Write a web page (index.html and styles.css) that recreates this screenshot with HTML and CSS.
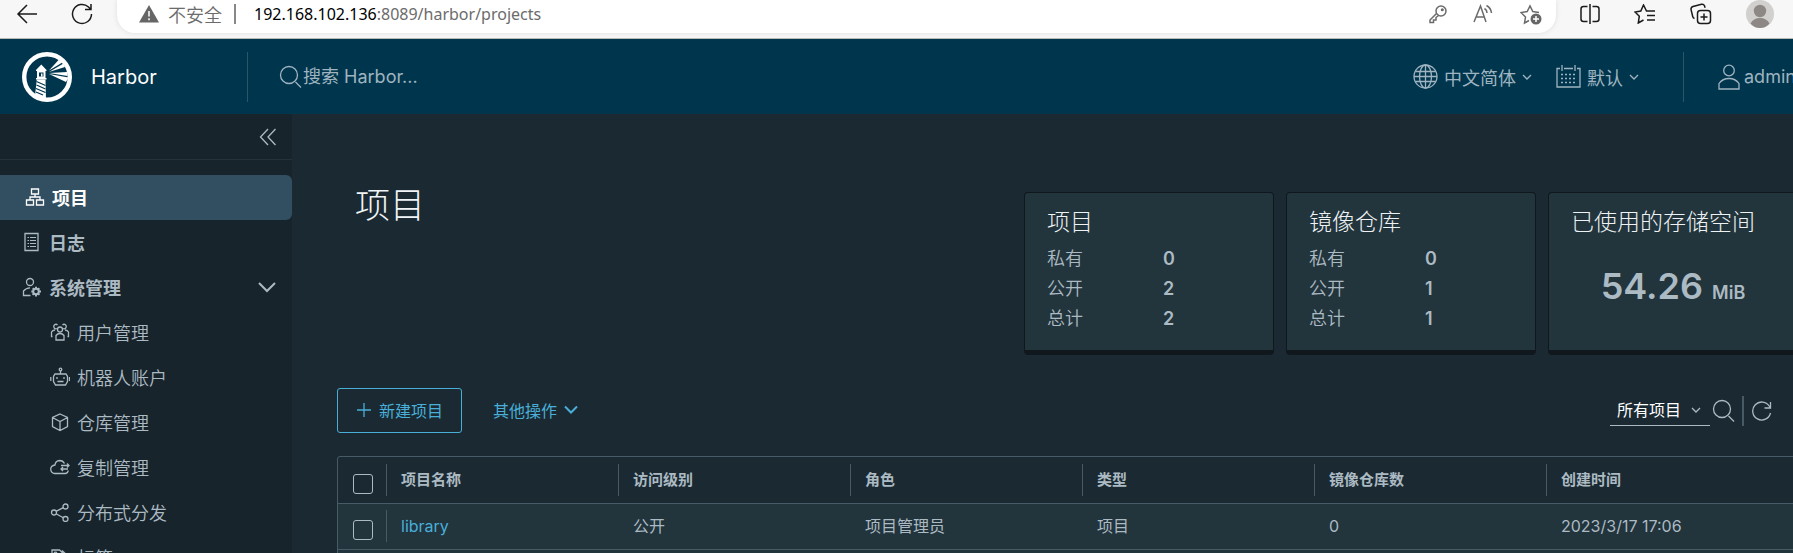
FILE: index.html
```html
<!DOCTYPE html>
<html lang="zh-CN">
<head>
    <meta charset="UTF-8">
    <meta name="viewport" content="width=device-width, initial-scale=1.0">
    <title>Harbor</title>
    <link rel="stylesheet" href="styles.css">
</head>
<body>
    <div class="browser-bar">
        <button class="browser-btn" aria-label="返回">
            <svg width="22" height="22" viewBox="0 0 22 22"><path d="M21 11H2M11 2l-9 9 9 9"/></svg>
        </button>
        <button class="browser-btn" aria-label="刷新">
            <svg width="22" height="22" viewBox="0 0 22 22"><path d="M20.500 11a9.500 9.500 0 1 1-3-7L20 6.500M20 1v5.500h-6"/></svg>
        </button>
        <div class="address">
            <svg width="20" height="20" viewBox="0 0 20 20"><path class="solid" d="M10 1 20 18.500H0z"/><path class="mark" d="M10 7v5.500M10 14.300v2"/></svg>
            <span class="insecure">不安全</span>
            <span class="address-divider"></span>
            <span class="url"><b>192.168.102.136</b>:8089/harbor/projects</span>
            <div class="address-actions">
                <button class="browser-btn" aria-label="密码">
                    <svg width="18" height="20" viewBox="0 0 18 20"><circle cx="12" cy="7" r="5"/><circle cx="13.300" cy="5.700" r=".8"/><path d="M7.500 9.500 1 16v2.500h3.500V16H7v-2.500l2.500-2"/></svg>
                </button>
                <button class="browser-btn" aria-label="朗读">
                    <svg width="21" height="20" viewBox="0 0 21 20"><path d="M1 18 7.500 2 13 18M3 13h8.500M11.500 4.500q2.500 1.500 2.500 4.500M13.500 1.500q4.500 2.500 5 7.500"/></svg>
                </button>
                <button class="browser-btn" aria-label="收藏">
                    <svg width="22" height="22" viewBox="0 0 22 22"><path d="M9 17.500 4.500 20l1-6L1 9.500l6.200-.9L10 3l2.800 5.600 6.200.9"/><circle class="solid" cx="16" cy="16" r="5.500"/><path class="mark" d="M16 13v6M13 16h6"/></svg>
                </button>
            </div>
        </div>
        <div class="browser-tools">
            <button class="browser-btn" aria-label="分屏">
                <svg width="20" height="20" viewBox="0 0 20 20"><path d="M7.500 2.500H3.500q-2.500 0-2.500 2.500v10q0 2.500 2.500 2.500h4M12.500 2.500h4q2.500 0 2.500 2.500v10q0 2.500-2.500 2.500h-4M10 0v20"/></svg>
            </button>
            <button class="browser-btn" aria-label="收藏夹">
                <svg width="22" height="20" viewBox="0 0 22 20"><path d="M14 7h-1.500L9.500 1 6.800 7 1 8l4.300 4.200L4.300 19l5.200-3M14 7h7M13 11.500h8M13 16h8"/></svg>
            </button>
            <button class="browser-btn" aria-label="集锦">
                <svg width="22" height="22" viewBox="0 0 22 22"><rect x="7.500" y="7.500" width="13" height="13" rx="3"/><path d="M14 10.500v7M10.500 14h7M4.500 15.500Q3 15 2.700 13.500L1 6.500Q.8 4.300 3 3.500l8.500-2.200q2.200-.4 3 1.500l.6 2"/></svg>
            </button>
            <button class="browser-btn" aria-label="用户">
                <svg width="28" height="28" viewBox="0 0 28 28"><circle class="avatar-bg" cx="14" cy="14" r="14"/><circle class="avatar" cx="14" cy="11" r="6.200"/><path class="avatar" d="M4.500 23.500q3-5.500 9.500-5.500t9.500 5.500Q19.500 28 14 28t-9.500-4.500z"/></svg>
            </button>
        </div>
    </div>

    <div class="app">
        <header class="header">
            <a class="brand" href="#projects">
                <svg width="50" height="50" viewBox="0 0 50 50">
                    <circle cx="25" cy="25" r="22.800" fill="none" stroke="#fff" stroke-width="4.400"/>
                    <g fill="#fff">
                        <path d="M19.300 12.500 24.500 18v1h-1v7h1v1.500H14V26h1v-7h-1v-1z"/>
                        <path d="M14.800 27.500h8.700L24 48l-11-4z"/>
                        <path d="M27 18.500 36.500 8l5.500 1.500z"/>
                        <path d="M27 20 41.500 11.500 43 15z"/>
                        <path d="M27 21l18.500-1v4z"/>
                        <path d="M27 22l19.500 3.500L44 30z"/>
                    </g>
                    <path d="M17 20.500h4.500v4H17z" fill="#00364d"/>
                    <path d="M19 21.500h1.500v3H19z" fill="#fff"/>
                    <path d="M14.500 29.500l9 4M14.500 33l9 4M14 36.500l9.500 4M14 40l7 3" stroke="#00364d" stroke-width="1.200"/>
                </svg>
                <span>Harbor</span>
            </a>
            <form class="search">
                <svg width="23" height="23" viewBox="0 0 23 23"><circle cx="10" cy="10" r="8.500"/><path d="M16.500 17 22 22.500"/></svg>
                <input type="text" placeholder="搜索 Harbor..." aria-label="搜索 Harbor">
            </form>
            <div class="header-actions">
                <button class="header-btn">
                    <svg width="25" height="25" viewBox="0 0 25 25"><circle cx="12.500" cy="12.500" r="11.500"/><ellipse cx="12.500" cy="12.500" rx="6" ry="11.500"/><path d="M12.500 1v23M2.500 7.500h20M1 12.500h23M2.500 17.500h20"/></svg>
                    <span>中文简体</span>
                    <svg width="10" height="10" viewBox="0 0 10 10"><path d="M1 3l4 4 4-4"/></svg>
                </button>
                <button class="header-btn">
                    <svg width="25" height="25" viewBox="0 0 25 25"><path d="M4 4.500H1v18.500h23V4.500h-3M8 4.500h9M6 1v6M19 1v6"/><path d="M5 10.500h16M5 14.500h16M5 18.500h16" stroke-dasharray="2 2"/></svg>
                    <span>默认</span>
                    <svg width="10" height="10" viewBox="0 0 10 10"><path d="M1 3l4 4 4-4"/></svg>
                </button>
                <button class="header-btn user">
                    <svg width="22" height="26" viewBox="0 0 22 26"><circle cx="11" cy="6.500" r="5.300"/><path d="M1 25v-5.500q3.500-5 10-5t10 5V25z"/></svg>
                    <span>admin</span>
                </button>
            </div>
        </header>

        <div class="content">
            <nav class="sidebar">
                <div class="collapse">
                    <button aria-label="收起">
                        <svg width="18" height="18" viewBox="0 0 18 18"><path d="M9 1 1.500 9 9 17M16.500 1 9 9l7.500 8"/></svg>
                    </button>
                </div>
                <ul>
                    <li><a class="active" href="#projects">
                        <svg width="20" height="20" viewBox="0 0 20 20"><path d="M6.500 2h7v5h-7zM1.500 13h7v5h-7zM11.500 13h7v5h-7zM10 7v3M5 13v-3h10v3"/></svg>
                        项目</a></li>
                    <li><a href="#logs">
                        <svg width="20" height="20" viewBox="0 0 20 20"><path d="M3 1.500h13v17H3z"/><path d="M5.500 5.500h1.500M5.500 8.500h1.500M5.500 11.500h1.500M5.500 14.500h1.500M8 5.500h6M8 8.500h6M8 11.500h6M8 14.500h6" stroke-width="1"/></svg>
                        日志</a></li>
                    <li><a href="#admin">
                        <svg width="20" height="20" viewBox="0 0 20 20"><circle cx="8" cy="5" r="3.500"/><path d="M8.500 18.500H1.500V14q2.500-3 6.500-3.200"/><circle cx="14" cy="14.500" r="2.800" stroke-width="2"/><path d="M14 9.800v2M14 17.500v2M9.300 14.500h2M17 14.500h2M10.700 11.200l1.200 1.200M16 16.500l1.400 1.400M17.400 11.200 16 12.500M12 16.500l-1.400 1.400" stroke-width="2"/></svg>
                        系统管理
                        <svg class="chevron" width="18" height="18" viewBox="0 0 18 18"><path d="M1 5l8 8 8-8" stroke-width="2"/></svg></a>
                        <ul class="submenu">
                            <li><a href="#users">
                                <svg width="20" height="20" viewBox="0 0 20 20"><circle cx="10" cy="7.500" r="2.500"/><path d="M6 18v-4.500q1.500-2 4-2t4 2V18zM7 6.500A2.200 2.200 0 1 1 7.500 3M13 6.500A2.200 2.200 0 1 0 12.500 3M2.500 14.500H1.500V10q1-1.800 3.500-2M17.500 14.500h1V10q-1-1.800-3.500-2"/></svg>
                                用户管理</a></li>
                            <li><a href="#robots">
                                <svg width="20" height="20" viewBox="0 0 20 20"><circle cx="10.500" cy="2.500" r="1.300"/><path d="M10.500 4v3M5 7h11l1.500 2.500v5L15.500 18h-10l-2-3.500v-5zM.8 10v4M19.500 10v4M7 10v2M14 10v2M7.500 14.500h6"/></svg>
                                机器人账户</a></li>
                            <li><a href="#registries">
                                <svg width="20" height="20" viewBox="0 0 20 20"><path d="M10 2l7.500 3.500v9L10 18.500 2.500 14.500v-9zM2.500 5.500 10 9.500l7.500-4M10 9.500v9"/></svg>
                                仓库管理</a></li>
                            <li><a href="#replications">
                                <svg width="20" height="20" viewBox="0 0 20 20"><path d="M14.500 6.500Q13 3.500 9.500 3.500q-4 .3-4.500 4.500-4 .5-4.300 4Q.8 16 4.500 16.500h11q2.500-.5 2.700-3M11 8.500h8M17 6.500l2 2-2 2M18 12h-7M13 10l-2 2 2 2"/></svg>
                                复制管理</a></li>
                            <li><a href="#distributions">
                                <svg width="20" height="20" viewBox="0 0 20 20"><circle cx="4" cy="10.500" r="2.500"/><circle cx="15.500" cy="4.500" r="2.500"/><circle cx="15.500" cy="17" r="2.500"/><path d="M6 9.300l7.300-3.700M6 11.700l7.300 4"/></svg>
                                分布式分发</a></li>
                            <li><a href="#labels">
                                <svg width="20" height="20" viewBox="0 0 20 20"><path d="M2 3h7.500l8.500 8-6 7-10-9zM12 3.500l7 6.500"/><circle cx="5.500" cy="6.500" r="1.300"/></svg>
                                标签</a></li>
                        </ul>
                    </li>
                </ul>
            </nav>

            <main>
                <section class="summary">
                    <h1>项目</h1>
                    <div class="cards">
                        <div class="card">
                            <h2>项目</h2>
                            <dl>
                                <dt>私有</dt><dd>0</dd>
                                <dt>公开</dt><dd>2</dd>
                                <dt>总计</dt><dd>2</dd>
                            </dl>
                        </div>
                        <div class="card">
                            <h2>镜像仓库</h2>
                            <dl>
                                <dt>私有</dt><dd>0</dd>
                                <dt>公开</dt><dd>1</dd>
                                <dt>总计</dt><dd>1</dd>
                            </dl>
                        </div>
                        <div class="card">
                            <h2>已使用的存储空间</h2>
                            <p class="storage">54.26 <small>MiB</small></p>
                        </div>
                    </div>
                </section>

                <section class="toolbar">
                    <button class="btn-new">
                        <svg width="16" height="16" viewBox="0 0 16 16"><path d="M8 1v14M1 8h14"/></svg>
                        新建项目
                    </button>
                    <button class="btn-more">
                        其他操作
                        <svg width="14" height="14" viewBox="0 0 14 14"><path d="M1 3.500l6 6 6-6" stroke-width="2"/></svg>
                    </button>
                    <div class="filters">
                        <div class="select-wrap">
                            <select aria-label="项目筛选">
                                <option>所有项目</option>
                                <option>私有项目</option>
                                <option>公开项目</option>
                            </select>
                            <svg width="10" height="10" viewBox="0 0 10 10"><path d="M1 3l4 4 4-4"/></svg>
                        </div>
                        <button aria-label="搜索">
                            <svg width="23" height="23" viewBox="0 0 23 23"><circle cx="10" cy="10" r="8.500"/><path d="M16.500 17 22 22.500"/></svg>
                        </button>
                        <span class="filter-divider"></span>
                        <button aria-label="刷新列表">
                            <svg width="20" height="20" viewBox="0 0 20 20"><path d="M18.500 12a9 9 0 1 1-1-6.500L18.500 7M18.500 1v6h-6"/></svg>
                        </button>
                    </div>
                </section>

                <div class="datagrid">
                    <table>
                        <thead>
                            <tr>
                                <th class="col-check"><input type="checkbox" aria-label="全选"></th>
                                <th><div>项目名称</div></th>
                                <th><div>访问级别</div></th>
                                <th><div>角色</div></th>
                                <th><div>类型</div></th>
                                <th><div>镜像仓库数</div></th>
                                <th class="col-time"><div>创建时间</div></th>
                            </tr>
                        </thead>
                        <tbody>
                            <tr>
                                <td><input type="checkbox" aria-label="选择 library"></td>
                                <td><div><a href="#library">library</a></div></td>
                                <td><div>公开</div></td>
                                <td><div>项目管理员</div></td>
                                <td><div>项目</div></td>
                                <td><div>0</div></td>
                                <td><div>2023/3/17 17:06</div></td>
                            </tr>
                            <tr>
                                <td></td><td></td><td></td><td></td><td></td><td></td><td></td>
                            </tr>
                        </tbody>
                    </table>
                </div>
            </main>
        </div>
    </div>
</body>
</html>
```

FILE: styles.css
```css
* {
    box-sizing: border-box;
}
body {
    margin: 0;
    height: 100vh;
    overflow: hidden;
    display: flex;
    flex-direction: column;
    font-family: Inter, "Noto Sans CJK SC", sans-serif;
    font-size: 16px;
    color: #acbac3;
    background: #1b2a32;
}
button {
    padding: 0;
    border: 0;
    background: none;
    color: inherit;
    font: inherit;
    cursor: pointer;
}
a {
    color: inherit;
    text-decoration: none;
}
ul {
    list-style: none;
    margin: 0;
    padding: 0;
}
svg {
    display: block;
    flex: none;
    fill: none;
    stroke: currentColor;
    stroke-width: 1.3;
}
.brand svg {
    stroke: none;
}

/* browser bar */
.browser-bar {
    flex: none;
    display: flex;
    align-items: flex-start;
    height: 39px;
    padding-left: 16px;
    border-bottom: 1px solid #b9b9b9;
    background: #f7f7f7;
    color: #1b1b1b;
}
.browser-btn {
    display: flex;
    align-items: center;
    height: 28px;
    margin-right: 33px;
}
.browser-bar svg {
    stroke-width: 1.5;
}
.browser-bar .solid {
    fill: #666;
    stroke: none;
}
.browser-bar .mark {
    stroke: #fff;
}
.browser-bar .avatar-bg {
    fill: #d2d0ce;
    stroke: none;
}
.browser-bar .avatar {
    fill: #8d8885;
    stroke: none;
}
.address {
    flex: 1;
    display: flex;
    align-items: center;
    height: 33px;
    margin-left: -9px;
    padding: 0 14px 5px 22px;
    border-radius: 0 0 18px 18px;
    background: #fff;
    box-shadow: 0 0 5px #ddd;
    color: #6b6b6b;
    font-family: "Noto Sans", "Noto Sans CJK SC", sans-serif;
    font-size: 16px;
}
.insecure {
    margin-left: 9px;
    font-size: 18px;
    font-weight: 350;
}
.address-divider {
    width: 2px;
    height: 20px;
    margin: 0 18px 0 12px;
    background: #888;
}
.url b {
    color: #000;
    font-weight: normal;
}
.address-actions {
    display: flex;
    gap: 26px;
    margin-left: auto;
}
.address-actions .browser-btn {
    margin: 0;
}
.browser-tools {
    display: flex;
    gap: 34px;
    margin: 0 19px 0 24px;
}
.browser-tools .browser-btn {
    margin: 0;
}

/* the console is wider than the window, its right edge is cut off */
.app {
    flex: 1;
    display: flex;
    flex-direction: column;
    min-height: 0;
    margin-right: -40px;
}
.header {
    flex: none;
    display: flex;
    align-items: center;
    height: 75px;
    padding-left: 22px;
    background: #00364d;
    color: #9fb4c0;
    font-size: 18px;
}
.brand {
    display: flex;
    align-items: center;
    gap: 19px;
    width: 226px;
    height: 50px;
    border-right: 1px solid #2b566a;
    color: #fff;
    font-size: 20px;
}
.search {
    flex: 1;
    display: flex;
    align-items: center;
    gap: 1px;
    margin-left: 31px;
}
.search input {
    flex: 1;
    padding: 0;
    border: 0;
    outline: 0;
    background: none;
    color: #fff;
    font: inherit;
}
.search input::placeholder {
    color: #9fb4c0;
    opacity: 1;
}
.header-actions {
    display: flex;
    align-items: center;
}
.header-btn {
    display: flex;
    align-items: center;
    gap: 6px;
    margin-right: 24px;
}
.header-btn.user {
    gap: 4px;
    width: 150px;
    height: 50px;
    margin: 0 0 0 20px;
    padding-left: 34px;
    border-left: 1px solid #2b566a;
}

/* sidebar */
.content {
    flex: 1;
    display: flex;
    min-height: 0;
}
.sidebar {
    flex: none;
    width: 292px;
    overflow: hidden;
    background: #17242b;
}
.collapse {
    display: flex;
    justify-content: flex-end;
    height: 46px;
    margin-bottom: 15px;
    padding-right: 15px;
    border-bottom: 1px solid #253239;
}
.sidebar a {
    display: flex;
    align-items: center;
    gap: 7px;
    height: 45px;
    padding: 0 0 2px 22px;
    font-size: 18px;
    font-weight: bold;
}
.sidebar a.active {
    padding-left: 25px;
    border-radius: 0 6px 6px 0;
    background: #324f61;
    color: #fff;
}
.sidebar .chevron {
    margin-left: auto;
    margin-right: 16px;
}
.sidebar .submenu a {
    padding-left: 50px;
    font-weight: 350;
}

/* main */
main {
    flex: 1;
    padding: 78px 35px 0 45px;
}
.summary {
    display: flex;
    justify-content: space-between;
    align-items: flex-start;
}
h1 {
    margin: 0 0 0 18px;
    color: #f0f4f6;
    font-size: 35px;
    font-weight: 300;
    line-height: 26px;
}
.cards {
    display: flex;
    gap: 12px;
}
.card {
    width: 250px;
    padding: 14px 22px 15px;
    border: 1px solid #10181d;
    border-bottom-width: 5px;
    border-radius: 4px;
    background: #22343c;
}
.card h2 {
    margin: 0 0 7px;
    color: #eef2f4;
    font-size: 23px;
    font-weight: 300;
    line-height: 30px;
    white-space: nowrap;
}
.card dl {
    display: grid;
    grid-template-columns: 116px 1fr;
    margin: 0;
    font-size: 18px;
    font-weight: 350;
    line-height: 30px;
}
.card dd {
    margin: 0;
    font-weight: 600;
}
.storage {
    margin: 0;
    font-size: 36px;
    font-weight: 600;
    line-height: 84px;
    text-align: center;
}
.storage small {
    font-size: 18px;
}
.toolbar {
    display: flex;
    align-items: center;
    height: 45px;
    margin: 33px 0 23px;
    color: #49afd9;
}
.btn-new {
    display: flex;
    align-items: center;
    gap: 7px;
    height: 45px;
    padding: 0 18px 2px;
    border: 1px solid #49afd9;
    border-radius: 3px;
}
.btn-more {
    display: flex;
    align-items: center;
    gap: 7px;
    margin-left: 31px;
    padding-bottom: 2px;
}
.filters {
    display: flex;
    align-items: center;
    margin-left: auto;
    margin-right: 26px;
    color: #acbac3;
}
.select-wrap {
    display: flex;
    align-items: center;
    width: 100px;
    height: 30px;
    margin-right: 2px;
    padding: 0 9px 0 7px;
    border-bottom: 1px solid #acbac3;
}
select {
    flex: 1;
    min-width: 0;
    padding: 0;
    border: 0;
    appearance: none;
    background: none;
    color: #fff;
    font: inherit;
}
.filter-divider {
    width: 2px;
    height: 30px;
    margin: 0 8px 0 7px;
    background: #495a67;
}

/* datagrid */
.datagrid {
    border: 1px solid #495a67;
    border-radius: 3px 3px 0 0;
}
table {
    width: 100%;
    table-layout: fixed;
    border-collapse: collapse;
}
th, td {
    width: 232px;
    height: 46px;
    padding: 0;
    text-align: left;
    border-bottom: 1px solid #495a67;
}
th.col-check {
    width: 48px;
}
th.col-time {
    width: auto;
}
th {
    font-size: 15px;
}
tbody {
    background: #22343c;
}
th div, td div {
    padding-left: 14px;
    line-height: 32px;
    border-left: 1px solid transparent;
}
th div, td:nth-child(2) div {
    border-color: #495a67;
}
td a {
    color: #49afd9;
}
input[type="checkbox"] {
    appearance: none;
    display: block;
    width: 20px;
    height: 20px;
    margin: 8px 0 0 15px;
    border: 1px solid #acbac3;
    border-radius: 3px;
}
```
